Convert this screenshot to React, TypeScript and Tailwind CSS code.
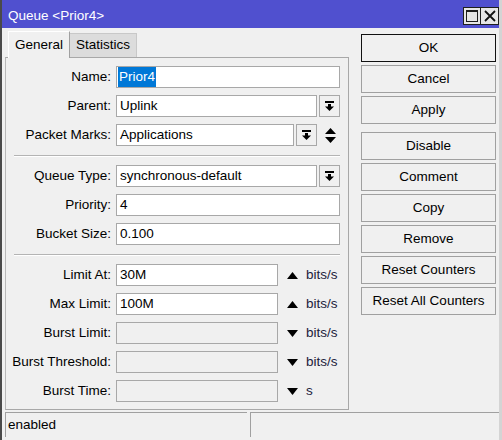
import React from 'react';

const font = { fontFamily: '"Liberation Sans", Arial, sans-serif' };

const DropGlyph = () => (
  <svg width="9" height="10" viewBox="0 0 9 10">
    <rect x="0" y="0" width="9" height="2" fill="#000" />
    <rect x="3" y="3" width="3" height="3" fill="#000" />
    <polygon points="0,5.5 9,5.5 4.5,10" fill="#000" />
  </svg>
);

const UpDown = () => (
  <svg width="11" height="15" viewBox="0 0 11 15">
    <polygon points="5.5,0 11,6 0,6" fill="#000" />
    <polygon points="0,9 11,9 5.5,15" fill="#000" />
  </svg>
);

const Up = () => (
  <svg width="11" height="7" viewBox="0 0 11 7">
    <polygon points="5.5,0 11,7 0,7" fill="#000" />
  </svg>
);

const Down = () => (
  <svg width="11" height="7" viewBox="0 0 11 7">
    <polygon points="0,0 11,0 5.5,7" fill="#000" />
  </svg>
);

const Label = ({ text }: { text: string }) => (
  <div className="w-[106px] shrink-0 text-right pr-[1px] whitespace-nowrap">{text}</div>
);

const Field = ({ value, width, disabled }: { value?: React.ReactNode; width: string; disabled?: boolean }) => (
  <div
    className={`${width} h-[22px] border border-[#a8a8a8] flex items-center pl-[3px] ${
      disabled ? 'bg-[#f0f0f0]' : 'bg-white'
    }`}
  >
    {value}
  </div>
);

const DropButton = () => (
  <div className="w-[21px] h-[22px] border border-[#a8a8a8] bg-[#f0f0f0] flex items-center justify-center">
    <DropGlyph />
  </div>
);

const Row = ({ children }: { children: React.ReactNode }) => (
  <div className="flex items-center h-[22px] gap-[4px]">{children}</div>
);

const Separator = () => (
  <div className="ml-[8px] w-[326px] mt-[9px] mb-[8px] border-t border-[#b4b4b4] border-b border-b-white" />
);

const limits = [
  { label: 'Limit At:', value: '30M', icon: <Up />, unit: 'bits/s' },
  { label: 'Max Limit:', value: '100M', icon: <Up />, unit: 'bits/s' },
  { label: 'Burst Limit:', value: '', icon: <Down />, unit: 'bits/s', disabled: true },
  { label: 'Burst Threshold:', value: '', icon: <Down />, unit: 'bits/s', disabled: true },
  { label: 'Burst Time:', value: '', icon: <Down />, unit: 's', disabled: true },
];

const buttons = ['OK', 'Cancel', 'Apply', 'Disable', 'Comment', 'Copy', 'Remove', 'Reset Counters', 'Reset All Counters'];

export default function App() {
  return (
    <div
      className="w-[502px] h-[440px] bg-[#f0f0f0] border-l-2 border-l-[#4a4a4a] border-r-[3px] border-r-[#d4d4d4] flex flex-col text-[13.5px] text-black overflow-hidden"
      style={font}
    >
      {/* title bar */}
      <div className="h-[28px] shrink-0 bg-[#5050cf] flex items-center pl-[6px] pr-0 text-white text-[13.5px]">
        <span className="pt-[4px]">Queue &lt;Prior4&gt;</span>
        <div className="ml-auto flex mt-[4px]">
          <div className="w-[18px] h-[18px] border border-[#1e1e1e] bg-[#e6e6e6] flex items-center justify-center">
            <div className="w-[12px] h-[12px] border border-[#1e1e1e] border-t-2" />
          </div>
          <div className="w-[18px] h-[18px] border border-[#1e1e1e] border-l-0 bg-[#e6e6e6] flex items-center justify-center">
            <svg width="12" height="12" viewBox="0 0 12 12">
              <path d="M1 1 L11 11 M11 1 L1 11" stroke="#111" strokeWidth="1.8" />
            </svg>
          </div>
        </div>
      </div>

      <div className="flex">
        {/* left column */}
        <div className="w-[347px] pl-[3px] shrink-0">
          <div className="flex items-end h-[29px] pl-[3px]">
            <div className="h-[27px] w-[62px] flex items-center justify-center bg-[#f0f0f0] border-l border-t border-white border-r border-r-[#a0a0a0] relative top-[1px] z-10">
              General
            </div>
            <div className="h-[24px] w-[67px] flex items-center justify-center bg-[#dcdcdc] border-t border-r border-[#c8c8c8]">
              Statistics
            </div>
          </div>
          <div className="w-[344px] h-[353px] border border-[#a8a8a8] border-l-[#b8b8b8] pt-[8px]">
            <div className="flex flex-col gap-[7px]">
              <Row>
                <Label text="Name:" />
                <Field
                  width="w-[224px]"
                  value={<span className="bg-[#0078d7] text-white px-[1px] -ml-[2px]">Prior4</span>}
                />
              </Row>
              <Row>
                <Label text="Parent:" />
                <div className="flex gap-[2px]">
                  <Field width="w-[201px]" value="Uplink" />
                  <DropButton />
                </div>
              </Row>
              <Row>
                <Label text="Packet Marks:" />
                <div className="flex gap-[2px] items-center">
                  <Field width="w-[178px]" value="Applications" />
                  <DropButton />
                  <div className="ml-[6px] flex items-center">
                    <UpDown />
                  </div>
                </div>
              </Row>
            </div>
            <Separator />
            <div className="flex flex-col gap-[7px]">
              <Row>
                <Label text="Queue Type:" />
                <div className="flex gap-[2px]">
                  <Field width="w-[201px]" value="synchronous-default" />
                  <DropButton />
                </div>
              </Row>
              <Row>
                <Label text="Priority:" />
                <Field width="w-[224px]" value="4" />
              </Row>
              <Row>
                <Label text="Bucket Size:" />
                <Field width="w-[224px]" value="0.100" />
              </Row>
            </div>
            <Separator />
            <div className="flex flex-col gap-[7px]">
              {limits.map((l) => (
                <Row key={l.label}>
                  <Label text={l.label} />
                  <Field width="w-[162px]" value={l.value} disabled={l.disabled} />
                  <div className="ml-[5px] flex items-center">{l.icon}</div>
                  <span className="ml-[4px] text-[#1c1c3c]">{l.unit}</span>
                </Row>
              ))}
            </div>
          </div>
        </div>

        {/* right column buttons */}
        <div className="ml-[12px] pt-[6px] flex flex-col gap-[3px]">
          {buttons.map((b, i) => (
            <div
              key={b}
              className={`w-[135px] h-[28px] flex items-center justify-center bg-[#f0f0f0] border ${
                i === 0 ? 'border-[#111]' : 'border-[#a0a0a0]'
              } ${i === 3 ? 'mt-[5px]' : ''}`}
            >
              {b}
            </div>
          ))}
        </div>
      </div>

      {/* status bar */}
      <div className="flex mt-[2px] pl-[3px] h-[25px] gap-[3px]">
        <div className="w-[242px] h-full border-t border-l border-[#a0a0a0] flex items-center pl-[2px]">enabled</div>
        <div className="flex-1 h-full border-t border-l border-[#a0a0a0]" />
      </div>
    </div>
  );
}
